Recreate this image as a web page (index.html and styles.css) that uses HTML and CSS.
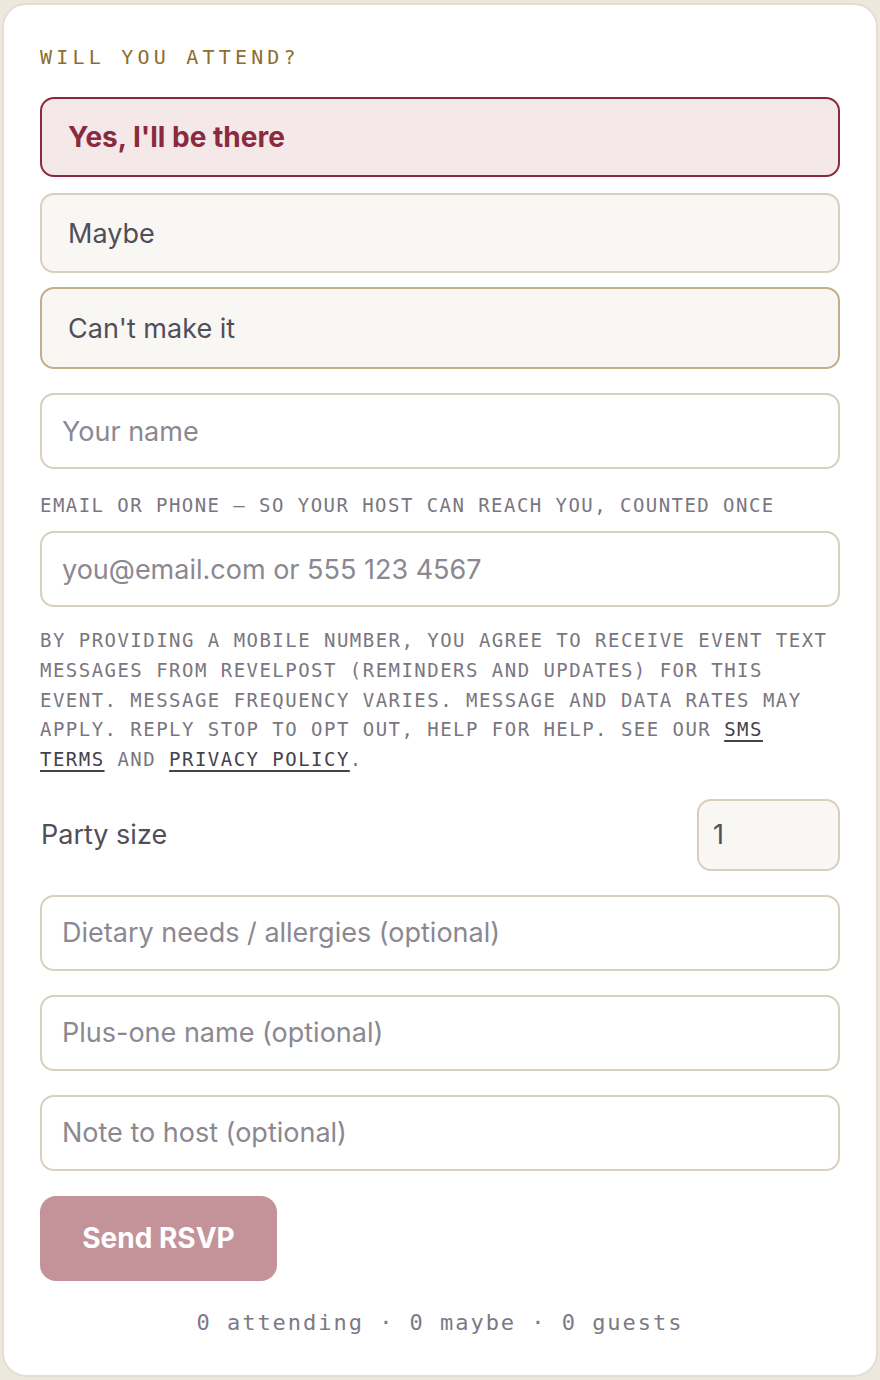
FILE: index.html
```html
<!DOCTYPE html>
<html lang="en">
<head>
<meta charset="utf-8">
<title>RSVP</title>
<link rel="stylesheet" href="styles.css">
</head>
<body>
<form class="card">
  <div class="title">WILL YOU ATTEND?</div>
  <div class="options">
    <button type="button" class="opt opt-yes">Yes, I'll be there</button>
    <button type="button" class="opt opt-maybe">Maybe</button>
    <button type="button" class="opt opt-no">Can't make it</button>
  </div>
  <input class="field field-name" type="text" placeholder="Your name">
  <div class="helper">EMAIL OR PHONE — SO YOUR HOST CAN REACH YOU, COUNTED ONCE</div>
  <input class="field field-email" type="text" placeholder="you@email.com or 555 123 4567">
  <p class="legal">BY PROVIDING A MOBILE NUMBER, YOU AGREE TO RECEIVE EVENT TEXT MESSAGES FROM REVELPOST (REMINDERS AND UPDATES) FOR THIS EVENT. MESSAGE FREQUENCY VARIES. MESSAGE AND DATA RATES MAY APPLY. REPLY STOP TO OPT OUT, HELP FOR HELP. SEE OUR <a href="#" class="link">SMS TERMS</a> AND <a href="#" class="link">PRIVACY POLICY</a>.</p>
  <div class="party">
    <label class="party-label">Party size</label>
    <input class="party-input" type="text" value="1">
  </div>
  <input class="field field-gap" type="text" placeholder="Dietary needs / allergies (optional)">
  <input class="field field-gap" type="text" placeholder="Plus-one name (optional)">
  <input class="field field-gap" type="text" placeholder="Note to host (optional)">
  <button type="button" class="send">Send RSVP</button>
  <div class="summary">0 attending · 0 maybe · 0 guests</div>
</form>
</body>
</html>
```
FILE: styles.css
```css
* {
  box-sizing: border-box;
}

html, body {
  margin: 0;
  padding: 0;
}

body {
  background: #ece8de;
  padding: 3px 2px 3px 2px;
  font-family: "Inter", "Noto Sans", sans-serif;
}

.card {
  display: flex;
  flex-direction: column;
  align-items: stretch;
  background: #ffffff;
  border: 2px solid #e4ded1;
  border-radius: 24px;
  padding: 40px 36px 38px 36px;
  margin: 0;
}

.title {
  font-family: "DejaVu Sans Mono", monospace;
  font-size: 20px;
  line-height: 24px;
  letter-spacing: 4.2px;
  color: #8e6d2e;
}

.options {
  display: flex;
  flex-direction: column;
  margin-top: 28px;
}

.opt {
  display: block;
  width: 100%;
  height: 80px;
  text-align: left;
  padding: 0 26px;
  border-radius: 14px;
  font-family: "Inter", "Noto Sans", sans-serif;
  font-size: 27px;
  color: #514e59;
  background: #f9f7f3;
  border: 2px solid #d9cfbe;
  cursor: pointer;
}

.opt-yes {
  background: #f5e8e8;
  border-color: #8b2a3e;
  color: #8b2a3e;
  font-size: 28px;
  font-weight: 700;
}

.opt-maybe {
  margin-top: 16px;
}

.opt-no {
  margin-top: 14px;
  height: 82px;
  border-color: #c4ae88;
}

.field {
  display: block;
  width: 100%;
  height: 76px;
  padding: 0 20px;
  border: 2px solid #d9cfbe;
  border-radius: 14px;
  background: #ffffff;
  font-family: "Inter", "Noto Sans", sans-serif;
  font-size: 27px;
  color: #514e59;
  outline: none;
}

.field::placeholder {
  color: #8b8891;
}

.field-name {
  margin-top: 24px;
}

.helper {
  margin-top: 24px;
  font-family: "DejaVu Sans Mono", monospace;
  font-size: 19px;
  line-height: 24px;
  letter-spacing: 1.45px;
  color: #7a7680;
  white-space: nowrap;
}

.field-email {
  margin-top: 14px;
}

.legal {
  margin: 19px 0 0 0;
  max-width: 795px;
  font-family: "DejaVu Sans Mono", monospace;
  font-size: 19px;
  line-height: 29.75px;
  letter-spacing: 1.47px;
  color: #7a7680;
}

.link {
  color: #45414c;
  text-decoration: underline;
  text-decoration-thickness: 1.5px;
  text-underline-offset: 4px;
}

.party {
  display: flex;
  align-items: center;
  justify-content: space-between;
  margin-top: 24px;
  height: 72px;
}

.party-label {
  font-size: 27px;
  color: #514e59;
  padding-left: 1px;
}

.party-input {
  width: 143px;
  height: 72px;
  padding: 0 14px;
  border: 2px solid #d9cfbe;
  border-radius: 14px;
  background: #f9f7f3;
  font-family: "Inter", "Noto Sans", sans-serif;
  font-size: 27px;
  color: #514e59;
  outline: none;
}

.field-gap {
  margin-top: 24px;
}

.send {
  align-self: flex-start;
  margin-top: 25px;
  width: 237px;
  height: 85px;
  border: none;
  border-radius: 16px;
  background: #c4939a;
  color: #ffffff;
  font-family: "Inter", "Noto Sans", sans-serif;
  font-size: 28px;
  font-weight: 700;
  cursor: pointer;
}

.summary {
  margin-top: 28px;
  text-align: center;
  font-family: "DejaVu Sans Mono", monospace;
  font-size: 22px;
  line-height: 28px;
  letter-spacing: 1.97px;
  color: #7d7985;
}
```
